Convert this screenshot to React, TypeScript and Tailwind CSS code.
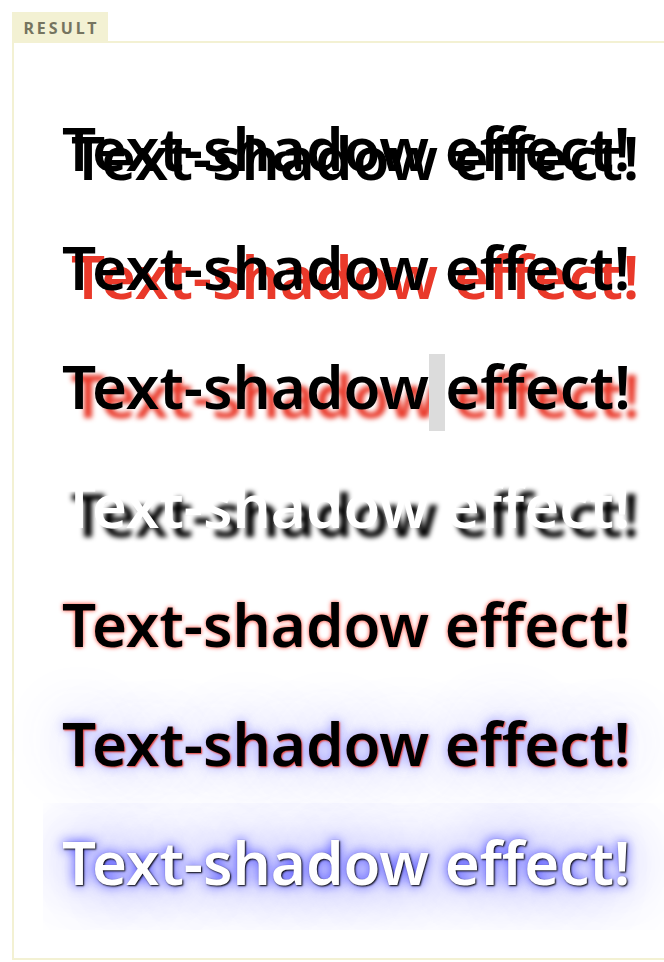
import React from "react";

const rows = [
  { color: "text-black", shadow: "[text-shadow:9px_9px_0_#000]" },
  { color: "text-black", shadow: "[text-shadow:9px_9px_0_#e9392a]" },
  { color: "text-black", shadow: "[text-shadow:9px_9px_5px_#e9392a]", gap: true },
  { color: "text-white", shadow: "[text-shadow:9px_9px_5px_#000]" },
  { color: "text-black", shadow: "[text-shadow:0_0_4px_#ff3b2b]" },
  { color: "text-black", shadow: "[text-shadow:1px_1px_2px_#e9392a,0_0_1em_rgba(70,70,255,0.45),0_0_0.2em_rgba(90,90,255,0.6)]" },
  { color: "text-white", shadow: "[text-shadow:1px_1px_2px_#000,0_0_1em_#4040ff,0_0_0.2em_#4040ff]", clip: true },
];

export default function App() {
  return (
    <div className="w-[664px] h-[962px] bg-white overflow-hidden pt-3 pl-3 font-['Noto_Sans',sans-serif]">
      <div className="flex">
        <div className="w-[96px] h-[31px] bg-[#f3f1d3] flex items-center justify-center pl-[3px] text-[16px] font-bold tracking-[3px] text-[#75745f]">
          RESULT
        </div>
        <div className="flex-1 mt-[29px] h-[2px] bg-[#f3f1d3]" />
      </div>
      <div className="h-[917px] border-l-2 border-b-2 border-[#f3f1d3] pt-[46px] pl-[29px]">
        {rows.map((r, i) => (
          <div
            key={i}
            className={`h-[119px] pl-[19px] text-[60px] leading-[119px] font-semibold whitespace-nowrap ${r.color} ${r.shadow} ${r.clip ? "overflow-hidden h-[127px]" : ""}`}
          >
            {r.gap ? (
              <>
                Text-shadow<span className="inline-block w-[16px] h-[77px] bg-[#dcdcdc] align-[-22px]" />effect!
              </>
            ) : (
              "Text-shadow effect!"
            )}
          </div>
        ))}
      </div>
    </div>
  );
}
